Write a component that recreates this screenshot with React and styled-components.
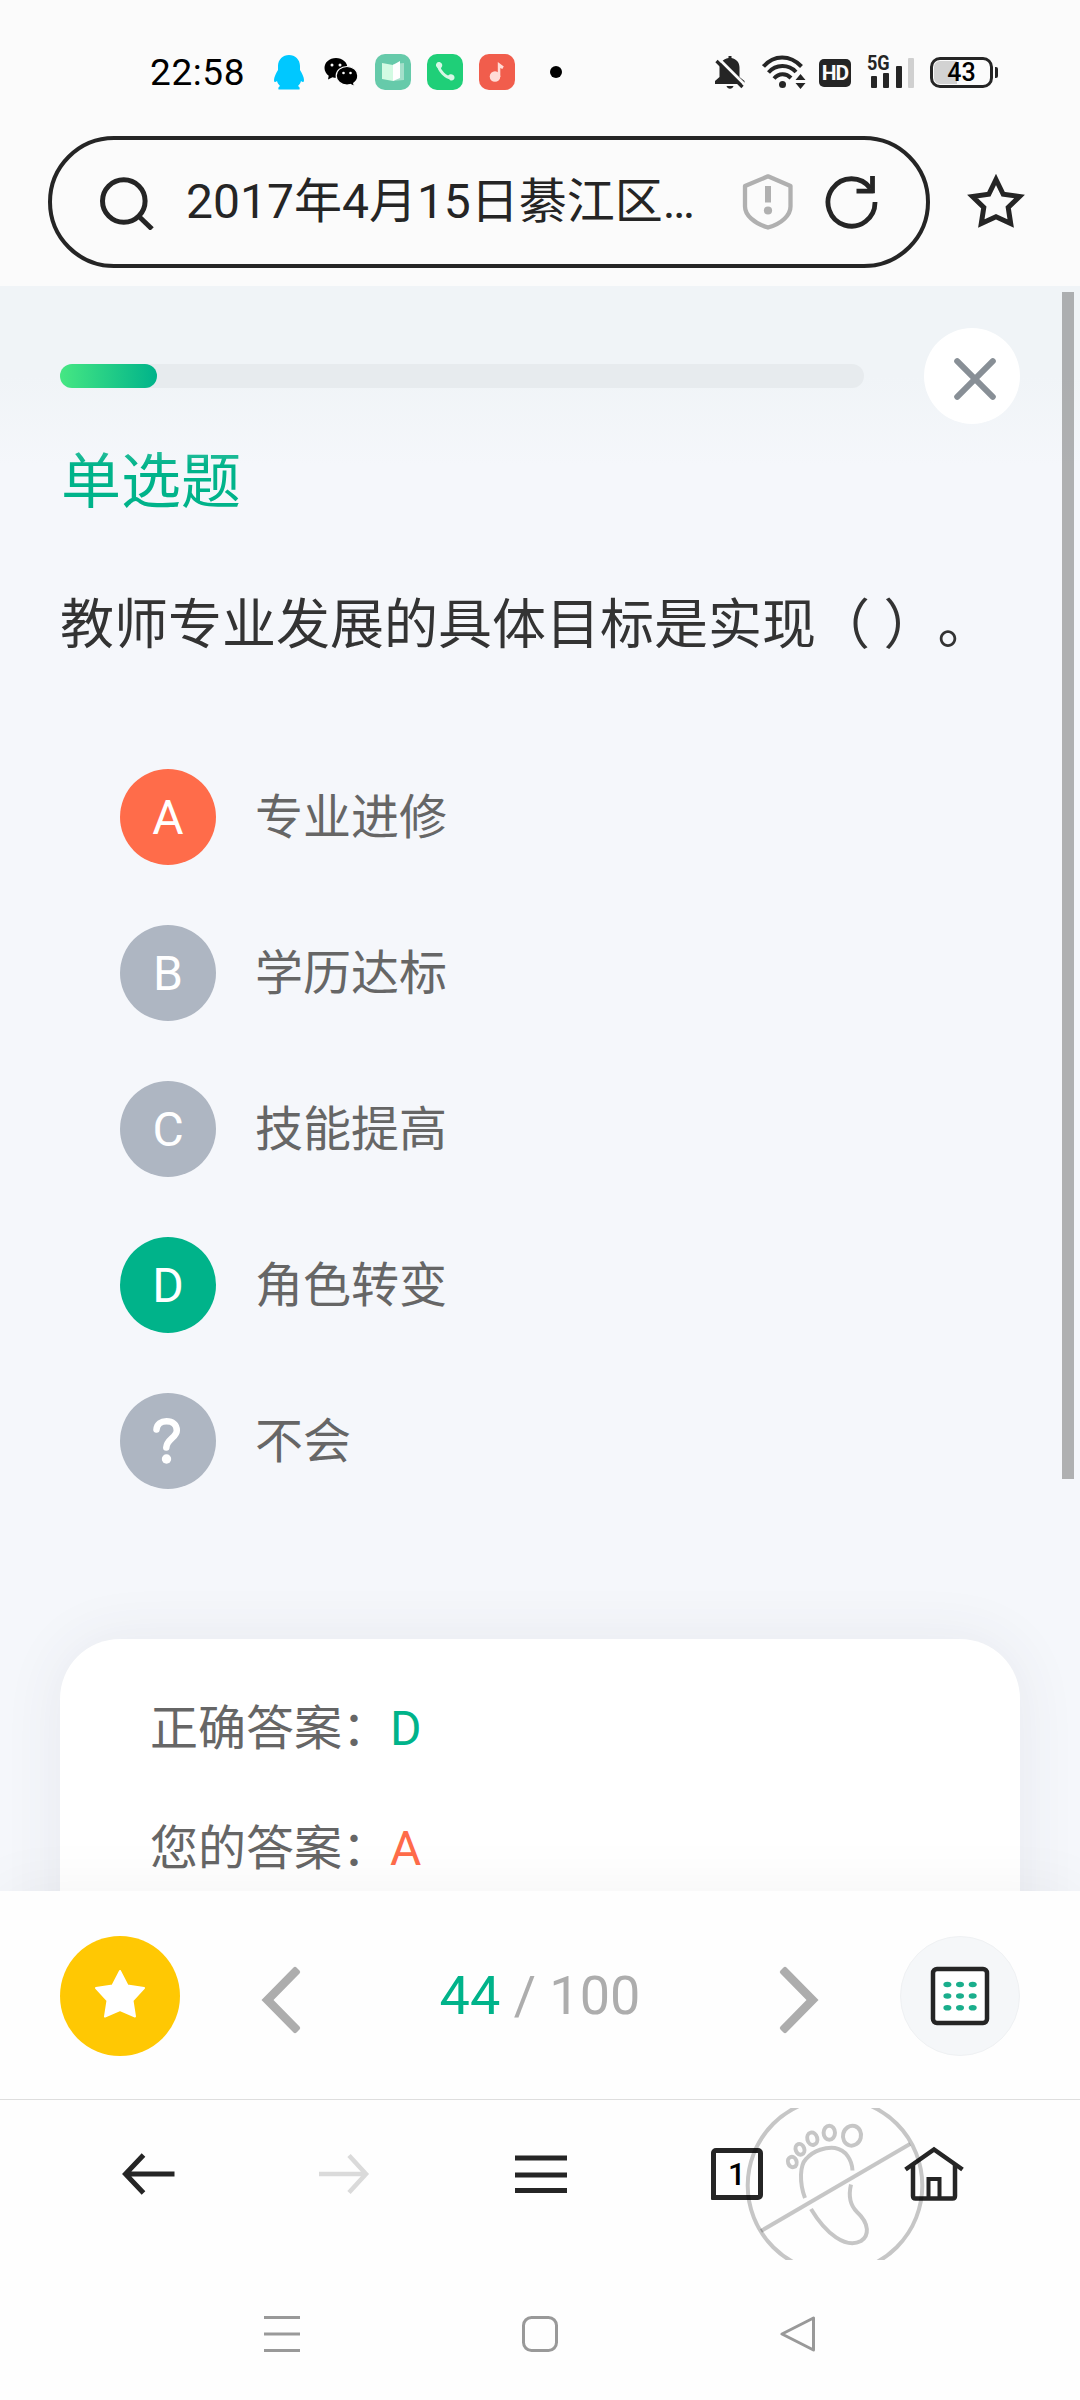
import styled, { createGlobalStyle } from "styled-components"

const GlobalStyle=createGlobalStyle`
    *{
        box-sizing: border-box;
    }
    body{
        margin: 0;
        background-color: #fefefe;
        font-family: Roboto, "Noto Sans CJK SC", sans-serif;
    }
    svg{
        display: block;
        flex-shrink: 0;
    }
`;

const Container=styled.div`
    width: 1080px;
    height: 2400px;
    display: flex;
    flex-direction: column;
    overflow: hidden;
`;

/* status bar */
const StatusBar=styled.div`
    height: 136px;
    padding: 8px 82px 0 150px;
    display: flex;
    align-items: center;
    justify-content: space-between;
    background-color: #fbfbfb;
`;
const StatusLeft=styled.div`
    display: flex;
    align-items: center;
    gap: 16px;
`;
const Chats=styled.div`
    display: flex;
    align-items: center;
    gap: 20px;
`;
const StatusRight=styled.div`
    display: flex;
    align-items: center;
`;
const Muted=styled.div`
    margin-right: 16px;
`;
const Time=styled.span`
    width: 108px;
    font-size: 37px;
    line-height: 40px;
    letter-spacing: 0.6px;
    color: #000;
    padding-top: 2px;
`;
const AppIcon=styled.div`
    width: 36px;
    height: 36px;
    border-radius: 10px;
    background-color: ${props=>props.$color};
`;
const Dot=styled.div`
    width: 12px;
    height: 12px;
    margin-left: 19px;
    border-radius: 50%;
    background-color: #000;
`;
const HdBadge=styled.div`
    width: 32px;
    height: 28px;
    margin: 2px 17px 0 13px;
    border-radius: 5px;
    background-color: #252525;
    color: #fbfbfb;
    font-size: 21px;
    font-weight: 700;
    line-height: 29px;
    text-align: center;
    letter-spacing: -1px;
`;
const Signal=styled.div`
    width: 48px;
    height: 34px;
    margin-right: 14px;
    position: relative;
    display: flex;
    align-items: flex-end;
    justify-content: space-between;
    padding: 0 2px 1px 3px;
`;
const Bar=styled.div`
    width: 6px;
    height: ${props=>props.$height}px;
    border-radius: 1px;
    background-color: ${props=>props.$off ? "#d0d0d0" : "#252525"};
`;
const NetType=styled.span`
    position: absolute;
    left: -1px;
    top: 0;
    font-size: 21px;
    font-weight: 700;
    line-height: 17px;
    transform: scaleX(0.86);
    transform-origin: left;
    color: #252525;
`;
const Battery=styled.div`
    width: 63px;
    height: 31px;
    margin-top: 1px;
    border: 3px solid #252525;
    border-radius: 10px;
    background: linear-gradient(90deg, #d2d2d2 0 24px, #fbfbfb 24px);
    background-clip: content-box;
    padding: 1px;
    font-size: 25px;
    font-weight: 500;
    line-height: 24px;
    text-align: center;
    color: #000;
`;
const BatteryTip=styled.div`
    width: 3px;
    height: 11px;
    margin-left: 2px;
    border-radius: 0 2px 2px 0;
    background-color: #252525;
`;

/* address bar */
const AddressBar=styled.div`
    height: 150px;
    padding-left: 48px;
    display: flex;
    align-items: flex-start;
    background-color: #fbfbfb;
`;
const AddressBox=styled.div`
    width: 882px;
    height: 132px;
    padding: 0 47px;
    border: 4px solid #252525;
    border-radius: 66px;
    display: flex;
    align-items: center;
`;
const PageTitle=styled.span`
    flex: 1;
    margin-left: 31px;
    font-size: 48px;
    line-height: 60px;
    color: #252525;
    white-space: nowrap;
`;
const AddressActions=styled.div`
    display: flex;
    align-items: center;
    gap: 31px;
`;
const Bookmark=styled.div`
    padding: 35px 0 0 36px;
`;

/* quiz page */
const Page=styled.main`
    height: 1605px;
    position: relative;
    overflow: hidden;
    background-color: #f5f7fb;
`;
const Scrollbar=styled.div`
    position: absolute;
    z-index: 3;
    top: 6px;
    right: 6px;
    width: 12px;
    height: 1187px;
    background-color: rgba(120,120,120,0.56);
`;
const PageHeader=styled.div`
    height: 180px;
    padding: 0 60px;
    position: relative;
    z-index: 2;
    display: flex;
    align-items: center;
    justify-content: space-between;
    background: linear-gradient(180deg, #f0f4f7 0, #f0f4f7 50%, rgba(245,247,251,0) 100%);
`;
const Progress=styled.div`
    width: 804px;
    height: 24px;
    border-radius: 12px;
    background-color: #e7ebee;
`;
const ProgressValue=styled.div`
    height: 24px;
    border-radius: 12px;
    background: linear-gradient(90deg, #46e783, #00b38a);
`;
const Close=styled.div`
    width: 96px;
    height: 96px;
    border-radius: 50%;
    background-color: #fff;
    display: flex;
    align-items: center;
    justify-content: center;
    padding: 5px 0 0 5px;
`;
const Type=styled.h1`
    margin: -25px 60px 0 61px;
    font-size: 60px;
    font-weight: 400;
    line-height: 84px;
    color: #00b38a;
`;
const Question=styled.p`
    margin: 61px 60px 0;
    font-size: 54px;
    line-height: 80px;
    color: #333;
    white-space: nowrap;
    text-spacing-trim: space-all;
`;
const Options=styled.div`
    margin: 103px 120px 0;
    display: flex;
    flex-direction: column;
    gap: 60px;
`;
const Option=styled.div`
    height: 96px;
    display: flex;
    align-items: center;
    gap: 39px;
`;
const Mark=styled.div`
    width: 96px;
    height: 96px;
    border-radius: 50%;
    display: flex;
    align-items: center;
    justify-content: center;
    font-size: 48px;
    color: #fff;
    background-color: ${props=>props.$state==="wrong" ? "#ff6c4a" : props.$state==="right" ? "#00b38a" : "#aeb6c2"};
`;
const OptionText=styled.span`
    font-size: 48px;
    line-height: 60px;
    padding-top: 2px;
    color: #666;
`;
const Answers=styled.div`
    height: 400px;
    margin: 150px 60px 0;
    padding: 30px 90px;
    border-radius: 60px;
    background-color: #fff;
    box-shadow: 0 0 60px rgba(60,60,90,0.08);
`;
const Answer=styled.div`
    font-size: 48px;
    line-height: 120px;
    color: #666;
`;
const Letter=styled.span`
    color: ${props=>props.$wrong ? "#ff6c4a" : "#00b38a"};
`;

/* quiz pager */
const Pager=styled.div`
    height: 209px;
    padding: 2px 60px 0;
    position: relative;
    display: flex;
    align-items: center;
    justify-content: space-between;
    background-color: #fefefe;
    border-bottom: 1px solid #dedede;
    box-shadow: 0 0 60px rgba(0,0,0,0.05);
`;
const Favorite=styled.div`
    width: 120px;
    height: 120px;
    border-radius: 50%;
    background-color: #ffc803;
    display: flex;
    align-items: center;
    justify-content: center;
    padding-bottom: 5px;
`;
const Sheet=styled(Favorite)`
    background-color: #f5f7f9;
    border: 1px solid #eff1f3;
    padding: 0;
`;
const Arrow=styled.div`
    padding-top: 7px;
`;
const Count=styled.div`
    margin: 0 58px;
    font-size: 54px;
    line-height: 64px;
    color: #adadad;
    white-space: pre;
`;
const Current=styled.span`
    color: #00b38a;
`;

/* browser toolbar */
const Toolbar=styled.div`
    height: 180px;
    padding: 0 116px 32px 122px;
    position: relative;
    display: flex;
    align-items: center;
    justify-content: space-between;
    background-color: #fefefe;
`;
const Tabs=styled.div`
    width: 52px;
    height: 52px;
    border: 5px solid #252525;
    border-radius: 5px 5px 5px 1px;
    font-size: 31px;
    font-weight: 500;
    line-height: 43px;
    text-align: center;
    color: #000;
`;
const HomeButton=styled.div`
    margin-left: -3px;
`;
const FootMark=styled.svg`
    position: absolute;
    left: 745px;
    top: 8px;
`;
const SystemNav=styled.div`
    height: 120px;
    padding: 0 264px 12px;
    display: flex;
    align-items: center;
    justify-content: space-between;
    background-color: #fefefe;
`;

const options=[
    {mark:"A", text:"专业进修", state:"wrong"},
    {mark:"B", text:"学历达标"},
    {mark:"C", text:"技能提高"},
    {mark:"D", text:"角色转变", state:"right"},
    {mark:"?", text:"不会"},
]

const Penguin=()=>(
    <svg width="30" height="35" viewBox="0 0 30 35" fill="#00c8ff">
        <path d="M15 0C9 0 4 4.500 4 11v4C2 18.500 0 22 0 25c0 2 1 3 3 1 .5 2 1.500 3.500 3 5-1.500.8-2 2-1.500 3.500h21c.5-1.500 0-2.700-1.500-3.500 1.500-1.500 2.500-3 3-5 2 2 3 1 3-1 0-3-2-6.500-4-10v-4C26 4.500 21 0 15 0z"/>
    </svg>
)

const WeChat=()=>(
    <svg width="35" height="30" viewBox="0 0 35 30">
        <path d="M12 1C5.400 1 .5 5.400.5 11c0 3.300 1.700 5.800 4.200 7.700L4 22.500l4.500-2.300c1.200.4 2.300.5 3.500.5 6.400 0 11.500-4.300 11.500-9.800S18.400 1 12 1z"/>
        <path d="M23 9.500c-6 0-10.800 4-10.800 9.200S17 28 23 28c1.200 0 2.300-.2 3.300-.5l4.200 2-.8-3.300c2.500-1.700 4.100-4.400 4.100-7.500 0-5.200-4.800-9.200-10.800-9.200z" stroke="#fbfbfb" strokeWidth="1.200"/>
        <g fill="#fbfbfb">
            <circle cx="8" cy="8" r="1.500"/>
            <circle cx="16" cy="8" r="1.500"/>
            <circle cx="19.500" cy="16" r="1.300"/>
            <circle cx="26.500" cy="16" r="1.300"/>
        </g>
    </svg>
)

const Book=()=>(
    <svg width="36" height="36" viewBox="0 0 36 36">
        <path d="M18 10l11-1v17l-11 1z" fill="#a4dfca"/>
        <path d="M7 9l11 2v16L7 25z" fill="#d3fbe3"/>
        <path d="M18 11l7-4v17l-7 3z" fill="#fff"/>
    </svg>
)

const Phone=()=>(
    <svg width="36" height="36" viewBox="0 0 36 36">
        <path d="M11.500 10.500C12 17 18 23.500 25.500 24.500" fill="none" stroke="#d8f7e5" strokeWidth="3"/>
        <path d="M9 12c-.5-3 2-5 4.500-3.500 2 1.200 2.500 3.500.5 5.500l-2 2zM20 22.500l2.500-2c2-.8 4.500 0 5 2.500.3 2.500-1.500 4-4 3.500z" fill="#d8f7e5"/>
    </svg>
)

const Music=()=>(
    <svg width="36" height="36" viewBox="0 0 36 36" fill="#ffdcd6">
        <circle cx="16" cy="22.500" r="5.300"/>
        <path d="M18.800 8l6 4.500-1.500 2.500-2-1v9h-2.500z"/>
    </svg>
)

const BellOff=()=>(
    <svg width="31" height="34" viewBox="0 0 31 34">
        <path d="M13.500 1h3v2c5 1 8 4.500 8 9.500V22l5 4v3H0v-3l4.500-4v-9.500C4.500 7.500 8 4 13.500 3z" fill="#252525"/>
        <path d="M11.500 31h7c-1 3.500-6 3.500-7 0z" fill="#252525"/>
        <path d="M3.500 3.500l26 26" stroke="#fbfbfb" strokeWidth="3"/>
        <path d="M1.500 6l26 26" stroke="#252525" strokeWidth="3.200"/>
    </svg>
)

const Wifi=()=>(
    <svg width="44" height="34" viewBox="0 0 44 34">
        <g fill="none" stroke="#252525" strokeWidth="4">
            <path d="M1.500 11.500C12-.5 28-.5 39.500 11.500"/>
            <path d="M6.500 17.500C14 9 26.500 9 34 17"/>
            <path d="M12 23.500c5-5.500 12-5.500 17-.5"/>
        </g>
        <circle cx="20.500" cy="29.500" r="3.500" fill="#252525"/>
        <path d="M38.500 19l5 6h-10zM38.500 34l5-6h-10z" fill="#252525"/>
    </svg>
)

const Search=()=>(
    <svg width="56" height="56" viewBox="0 0 56 56" fill="none" stroke="#252525" strokeWidth="5">
        <circle cx="24.800" cy="27" r="21.300"/>
        <path d="M40 42.500L53 55"/>
    </svg>
)

const Shield=()=>(
    <svg width="52" height="56" viewBox="0 0 52 56">
        <path d="M26 2.300L48.500 12v20.500C48.500 41 40 49.500 26 53.500 12 49.500 3 41 3 32.500V12z" fill="none" stroke="#b0b0b0" strokeWidth="4.300" strokeLinejoin="round"/>
        <path d="M26 12v16.500" stroke="#b0b0b0" strokeWidth="6"/>
        <circle cx="26" cy="36.500" r="4.100" fill="#b0b0b0"/>
    </svg>
)

const Reload=()=>(
    <svg width="54" height="54" viewBox="0 0 54 54" fill="none" stroke="#252525" strokeWidth="4.800">
        <path d="M50 27A23.500 23.700 0 1 1 45.500 13.500"/>
        <path d="M47.500 1v17.200M31.500 16.200h17"/>
    </svg>
)

const StarOutline=()=>(
    <svg width="60" height="60" viewBox="0 0 60 60">
        <path d="M30 8.500L37.200 23.300 53.500 25.500 42.200 36.500 44.700 52.500 30 45.700 15.300 52.500 17.800 36.500 6.500 25.500 22.800 23.300z" fill="none" stroke="#252525" strokeWidth="5"/>
    </svg>
)

const Cross=()=>(
    <svg width="42" height="42" viewBox="0 0 42 42" stroke="#888f96" strokeWidth="6" strokeLinecap="round">
        <path d="M3.200 3.200l35.600 35.600M38.800 3.200L3.200 38.800"/>
    </svg>
)

const Unknown=()=>(
    <svg width="30" height="46" viewBox="0 0 30 46">
        <path d="M3.500 11.500C4 6 8 3.300 13.500 3.300 19.500 3.300 23.800 6.500 23.800 12.500c0 7-10 8.500-10.500 17" fill="none" stroke="#fff" strokeWidth="6.500" strokeLinecap="round"/>
        <circle cx="13.500" cy="41" r="4.700" fill="#fff"/>
    </svg>
)

const Star=()=>(
    <svg width="52" height="50" viewBox="0 0 52 50">
        <path d="M26 2L33.500 16.500 50 19 38.500 31.500 41 47.500 26 41 11 47.500 13.500 31.500 2 19 18.500 16.500z" fill="#fff" stroke="#fff" strokeWidth="2" strokeLinejoin="round"/>
    </svg>
)

const Chevron=({next})=>(
    <svg width="40" height="68" viewBox="0 0 40 68">
        <path d={next ? "M1.500 7.500Q0 6 1.500 4.500L4.500 1.500Q6 0 7.500 1.500L39.500 34 7.500 66.500Q6 68 4.500 66.500L1.500 63.500Q0 62 1.500 60.500L27.500 34z" : "M38.500 7.500Q40 6 38.500 4.500L35.500 1.500Q34 0 32.500 1.500L.5 34 32.500 66.500Q34 68 35.500 66.500L38.500 63.500Q40 62 38.500 60.500L12.500 34z"} fill="#adadad"/>
    </svg>
)

const Grid=()=>(
    <svg width="60" height="60" viewBox="0 0 60 60">
        <rect x="3" y="3" width="54" height="54" rx="4" fill="#fff" stroke="#252525" strokeWidth="4.500"/>
        {[18.500,30,41.700].map(y=>[17.400,30,42.700].map(x=>
            <ellipse key={x+"-"+y} cx={x} cy={y} rx="4" ry="2.800" fill="#1aae8c"/>
        ))}
    </svg>
)

const Home=()=>(
    <svg width="60" height="56" viewBox="0 0 60 56" fill="none" stroke="#252525">
        <path d="M1.500 23.500L30 3.500 58.500 23.500" strokeWidth="4.500"/>
        <path d="M9 18v32q0 2.500 2.500 2.500h37q2.500 0 2.500-2.500V18" strokeWidth="4.500"/>
        <path d="M24.500 52V33h11v19" strokeWidth="4"/>
    </svg>
)

const App = () => {
  return (
    <Container>
        <GlobalStyle />
        <StatusBar>
            <StatusLeft>
                <Time>22:58</Time>
                <Chats>
                    <Penguin />
                    <WeChat />
                </Chats>
                <AppIcon $color="#66caaa"><Book /></AppIcon>
                <AppIcon $color="#1fcf78"><Phone /></AppIcon>
                <AppIcon $color="#f15d4c"><Music /></AppIcon>
                <Dot />
            </StatusLeft>
            <StatusRight>
                <Muted><BellOff /></Muted>
                <Wifi />
                <HdBadge>HD</HdBadge>
                <Signal>
                    <NetType>5G</NetType>
                    <Bar $height={12} />
                    <Bar $height={15} />
                    <Bar $height={22} />
                    <Bar $height={30} $off />
                </Signal>
                <Battery>43</Battery>
                <BatteryTip />
            </StatusRight>
        </StatusBar>
        <AddressBar>
            <AddressBox>
                <Search />
                <PageTitle>2017年4月15日綦江区…</PageTitle>
                <AddressActions>
                    <Shield />
                    <Reload />
                </AddressActions>
            </AddressBox>
            <Bookmark><StarOutline /></Bookmark>
        </AddressBar>
        <Page>
            <Scrollbar />
            <PageHeader>
                <Progress>
                    <ProgressValue style={{width:"12.1%"}} />
                </Progress>
                <Close><Cross /></Close>
            </PageHeader>
            <Type>单选题</Type>
            <Question>教师专业发展的具体目标是实现（ ）。</Question>
            <Options>
                {options.map((option)=>
                <Option key={option.mark}>
                    <Mark $state={option.state}>{option.mark==="?" ? <Unknown /> : option.mark}</Mark>
                    <OptionText>{option.text}</OptionText>
                </Option>
                )}
            </Options>
            <Answers>
                <Answer>正确答案：<Letter>D</Letter></Answer>
                <Answer>您的答案：<Letter $wrong>A</Letter></Answer>
            </Answers>
        </Page>
        <Pager>
            <Favorite><Star /></Favorite>
            <Arrow><Chevron /></Arrow>
            <Count><Current>44</Current> / 100</Count>
            <Arrow><Chevron next /></Arrow>
            <Sheet><Grid /></Sheet>
        </Pager>
        <Toolbar>
            <svg width="53" height="42" viewBox="0 0 53 42" fill="none" stroke="#252525" strokeWidth="5">
                <path d="M3 21h49.500M21.500 2L3.500 21l18 19"/>
            </svg>
            <svg width="51" height="40" viewBox="0 0 51 40" fill="none" stroke="#dadada" strokeWidth="4.500">
                <path d="M0 20h47M30 1.500L47 20 30 38.500"/>
            </svg>
            <svg width="52" height="38" viewBox="0 0 52 38" stroke="#252525" strokeWidth="5">
                <path d="M0 3h52M0 20h52M0 35.500h52"/>
            </svg>
            <Tabs>1</Tabs>
            <HomeButton><Home /></HomeButton>
            <FootMark width="180" height="152" viewBox="0 0 180 152" fill="none" stroke="#000" strokeOpacity="0.22" strokeWidth="4">
                <circle cx="90" cy="77.500" r="87.300"/>
                <path d="M16 123L165 36"/>
                <ellipse cx="47.300" cy="54" rx="4.300" ry="5.300" transform="rotate(-20 47.300 54)"/>
                <ellipse cx="55" cy="41.300" rx="4.300" ry="5.500" transform="rotate(-20 55 41.300)"/>
                <ellipse cx="67.300" cy="30.700" rx="5" ry="6.300" transform="rotate(-15 67.300 30.700)"/>
                <ellipse cx="84.300" cy="24.700" rx="5.700" ry="7"/>
                <ellipse cx="107" cy="27.700" rx="9" ry="10" transform="rotate(15 107 27.700)"/>
                <path d="M60 90C54 74 55 57 61 51C69 42 81 39 90 40C101 42 107 52 107.500 62.500"/>
                <path d="M106 76.500C103 89 106 98 112 104C125 116 124 128 116 133C101 141 81 126 66 101"/>
            </FootMark>
        </Toolbar>
        <SystemNav>
            <svg width="36" height="36" viewBox="0 0 36 36" stroke="#999" strokeWidth="3">
                <path d="M0 1.500h36M0 18h36M0 34.500h36"/>
            </svg>
            <svg width="36" height="36" viewBox="0 0 36 36" fill="none" stroke="#999" strokeWidth="3">
                <rect x="1.500" y="1.500" width="33" height="33" rx="8"/>
            </svg>
            <svg width="36" height="36" viewBox="0 0 36 36" fill="none" stroke="#999" strokeWidth="3" strokeLinejoin="round">
                <path d="M33.500 2v32L2 18z"/>
            </svg>
        </SystemNav>
    </Container>
  )
}

export default App
